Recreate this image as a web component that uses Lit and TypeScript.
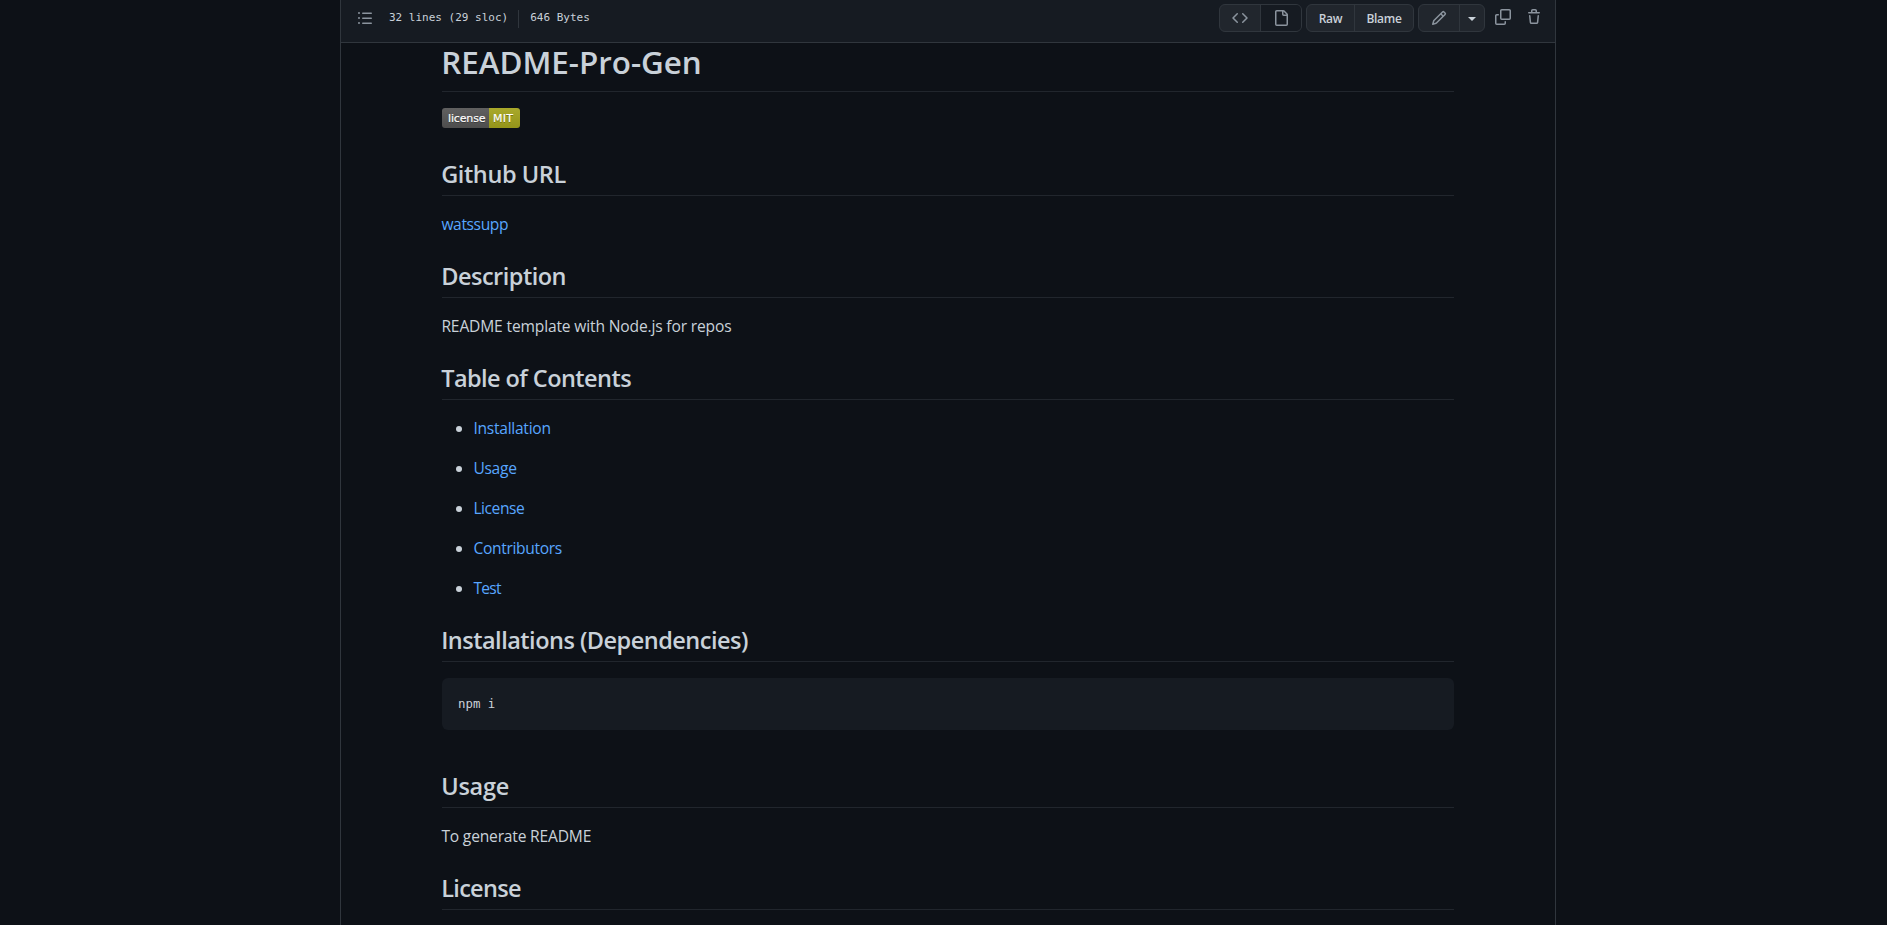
import { LitElement, html, css, svg } from "lit";
import { customElement } from "lit/decorators.js";

const ICONS = {
  list: "M2 4a1 1 0 100-2 1 1 0 000 2zm3.75-1.5a.75.75 0 000 1.5h8.5a.75.75 0 000-1.5h-8.5zm0 5a.75.75 0 000 1.5h8.5a.75.75 0 000-1.5h-8.5zm0 5a.75.75 0 000 1.5h8.5a.75.75 0 000-1.5h-8.5zM3 8a1 1 0 11-2 0 1 1 0 012 0zm-1 6a1 1 0 100-2 1 1 0 000 2z",
  code: "M4.72 3.22a.75.75 0 011.06 1.06L2.06 8l3.72 3.72a.75.75 0 11-1.06 1.06L.47 8.53a.75.75 0 010-1.06l4.25-4.25zm6.56 0a.75.75 0 10-1.06 1.06L13.94 8l-3.72 3.72a.75.75 0 101.06 1.06l4.25-4.25a.75.75 0 000-1.06l-4.25-4.25z",
  file: "M3.75 1.5a.25.25 0 00-.25.25v12.5c0 .138.112.25.25.25h9.5a.25.25 0 00.25-.25V6h-2.75A1.75 1.75 0 019 4.25V1.5H3.75zm6.75.062V4.25c0 .138.112.25.25.25h2.688a.252.252 0 00-.011-.013l-2.914-2.914a.272.272 0 00-.013-.011zM2 1.75C2 .784 2.784 0 3.75 0h6.586c.464 0 .909.184 1.237.513l2.914 2.914c.329.328.513.773.513 1.237v9.586A1.75 1.75 0 0113.25 16h-9.5A1.75 1.75 0 012 14.25V1.75z",
  pencil: "M11.013 1.427a1.75 1.75 0 012.474 0l1.086 1.086a1.75 1.75 0 010 2.474l-8.61 8.61c-.21.21-.47.364-.756.445l-3.251.93a.75.75 0 01-.927-.928l.929-3.25a1.75 1.75 0 01.445-.758l8.61-8.61zm1.414 1.06a.25.25 0 00-.354 0L10.811 3.75l1.439 1.44 1.263-1.263a.25.25 0 000-.354l-1.086-1.086zM11.189 6.25L9.75 4.81l-6.286 6.287a.25.25 0 00-.064.108l-.558 1.953 1.953-.558a.249.249 0 00.108-.064l6.286-6.286z",
  copy: "M0 6.75C0 5.784.784 5 1.75 5h1.5a.75.75 0 010 1.5h-1.5a.25.25 0 00-.25.25v7.5c0 .138.112.25.25.25h7.5a.25.25 0 00.25-.25v-1.5a.75.75 0 011.5 0v1.5A1.75 1.75 0 019.25 16h-7.5A1.75 1.75 0 010 14.25v-7.5zM5 1.75C5 .784 5.784 0 6.75 0h7.5C15.216 0 16 .784 16 1.75v7.5A1.75 1.75 0 0114.25 11h-7.5A1.75 1.75 0 015 9.25v-7.5zm1.75-.25a.25.25 0 00-.25.25v7.5c0 .138.112.25.25.25h7.5a.25.25 0 00.25-.25v-7.5a.25.25 0 00-.25-.25h-7.5z",
  trash: "M6.5 1.75a.25.25 0 01.25-.25h2.5a.25.25 0 01.25.25V3h-3V1.75zm4.5 0V3h2.25a.75.75 0 010 1.5H2.75a.75.75 0 010-1.5H5V1.75C5 .784 5.784 0 6.75 0h2.5C10.216 0 11 .784 11 1.75zM4.496 6.675a.75.75 0 10-1.492.15l.66 6.6A1.75 1.75 0 005.405 15h5.19c.9 0 1.652-.681 1.741-1.576l.66-6.6a.75.75 0 00-1.492-.149l-.66 6.6a.25.25 0 01-.249.225h-5.19a.25.25 0 01-.249-.225l-.66-6.6z",
};

const icon = (name: keyof typeof ICONS) =>
  html`<svg class="icon" viewBox="0 0 16 16" width="16" height="16" aria-hidden="true">${svg`<path fill-rule="evenodd" d=${ICONS[name]}></path>`}</svg>`;

/** Text paired with its letter spacing in pixels. */
type Tracked = [text: string, tracking: number];

const tracked = ([text, tracking]: Tracked) =>
  html`<span style="letter-spacing:${tracking}px">${text}</span>`;

const CONTENTS: Tracked[] = [
  ["Installation", -0.27],
  ["Usage", -0.3],
  ["License", -0.45],
  ["Contributors", -0.33],
  ["Test", -0.7],
];

@customElement("file-toolbar")
export class FileToolbar extends LitElement {
  static styles = css`
    :host {
      display: flex;
      align-items: flex-start;
      box-sizing: border-box;
      height: 43px;
      padding: 4px 13px 0 16px;
      background: #161b22;
      border-bottom: 1px solid #30363d;
      color: #c9d1d9;
    }
    .icon { display: block; fill: #8b949e; }
    .toc { margin: 6px 16px 0 0; }
    .info {
      display: flex;
      flex: 1;
      margin-top: 6px;
      font: 11px/16px "DejaVu Sans Mono", monospace;
      height: 18px;
    }
    .divider { width: 1px; height: 18px; margin: 0 11px 0 10px; background: #30363d; }
    .group {
      display: flex;
      box-sizing: border-box;
      height: 28px;
      margin-right: 4px;
      border: 1px solid #30363d;
      border-radius: 6px;
      background: #21262d;
      overflow: hidden;
    }
    .btn {
      display: flex;
      align-items: center;
      justify-content: center;
      box-sizing: border-box;
      font: 600 12px/20px "Open Sans", "Noto Sans", sans-serif;
      letter-spacing: -0.3px;
    }
    .btn + .btn { border-left: 1px solid #30363d; }
    .view .btn { width: 40px; }
    .view .active { width: 41px; background: #161b22; }
    .raw { width: 47px; padding-top: 2px; }
    .blame { width: 59px; padding-top: 2px; }
    .edit { width: 40px; }
    .more { width: 25px; }
    .caret {
      border: 4px solid transparent;
      border-top-color: #c9d1d9;
      border-bottom: 0;
      margin-top: 2px;
    }
    .plain { margin: 5px 0 0 6px; }
    .plain + .plain { margin-left: 15px; }
  `;

  render() {
    return html`
      <div class="toc">${icon("list")}</div>
      <div class="info">
        <span>32 lines (29 sloc)</span>
        <span class="divider"></span>
        <span>646 Bytes</span>
      </div>
      <div class="group view">
        <div class="btn">${icon("code")}</div>
        <div class="btn active">${icon("file")}</div>
      </div>
      <div class="group">
        <div class="btn raw">Raw</div>
        <div class="btn blame">Blame</div>
      </div>
      <div class="group">
        <div class="btn edit">${icon("pencil")}</div>
        <div class="btn more"><span class="caret"></span></div>
      </div>
      <div class="plain">${icon("copy")}</div>
      <div class="plain">${icon("trash")}</div>
    `;
  }
}

@customElement("license-badge")
export class LicenseBadge extends LitElement {
  static styles = css`
    :host {
      display: flex;
      width: 78px;
      height: 20px;
      border-radius: 3px;
      overflow: hidden;
      color: #fff;
      font: 11px/21px "DejaVu Sans", sans-serif;
      text-shadow: 0 1px 0 rgba(1, 1, 1, 0.3);
    }
    .label, .value {
      box-sizing: border-box;
      padding-left: 6px;
      background: linear-gradient(#606060, #4d4d4d);
      -webkit-text-stroke: 0.15px #fff;
    }
    .label { width: 47px; letter-spacing: -0.15px; }
    .value {
      width: 31px;
      padding-left: 4px;
      background: linear-gradient(#a9a92b, #94941a);
      letter-spacing: 0.2px;
    }
  `;

  render() {
    return html`<span class="label">license</span><span class="value">MIT</span>`;
  }
}

@customElement("app-root")
export class AppRoot extends LitElement {
  static styles = css`
    :host {
      display: block;
      height: 925px;
      overflow: hidden;
      background: #0d1117;
      color: #c9d1d9;
      font: 15.6px/24px "Open Sans", "Noto Sans", sans-serif;
    }
    .panel {
      box-sizing: border-box;
      width: 1216px;
      height: 925px;
      margin-left: 340px;
      border: solid #30363d;
      border-width: 0 1px;
    }
    .readme { width: 1012px; margin: 0 auto; }
    h1, h2 {
      box-sizing: border-box;
      margin: 24px 0 16px;
      border-bottom: 1px solid #21262d;
      font-weight: 600;
      white-space: nowrap;
      text-indent: -0.8px;
    }
    h1 { height: 49px; margin-top: 0; font-size: 31.4px; line-height: 38px; }
    h2 { height: 38px; font-size: 23.5px; line-height: 32px; }
    p, li { text-indent: -0.6px; }
    p { margin: 0 0 16px; }
    .badge { display: flex; height: 24px; text-indent: 0; }
    .link { color: #58a6ff; }
    .after-badge { margin-top: 26px; }
    ul { margin: 0 0 16px; padding-left: 32px; }
    li + li { margin-top: 16px; }
    pre {
      box-sizing: border-box;
      height: 52px;
      margin: 0;
      padding: 16px;
      border-radius: 6px;
      background: #161b22;
      font: 12.4px/20px "DejaVu Sans Mono", monospace;
    }
    .after-code { margin-top: 40px; }
  `;

  render() {
    return html`
      <main class="panel">
        <file-toolbar></file-toolbar>
        <article class="readme">
          <h1>${tracked(["README-Pro-Gen", -0.02])}</h1>
          <p class="badge"><license-badge></license-badge></p>
          <h2 class="after-badge">${tracked(["Github URL", -0.41])}</h2>
          <p class="link">${tracked(["watssupp", -0.38])}</p>
          <h2>${tracked(["Description", -0.5])}</h2>
          <p>${tracked(["README template with Node.js for repos", -0.16])}</p>
          <h2>${tracked(["Table of Contents", -0.56])}</h2>
          <ul>
            ${CONTENTS.map((item) => html`<li><a class="link">${tracked(item)}</a></li>`)}
          </ul>
          <h2>${tracked(["Installations (Dependencies)", -0.51])}</h2>
          <pre>npm i</pre>
          <h2 class="after-code">${tracked(["Usage", -0.25])}</h2>
          <p>${tracked(["To generate README", -0.19])}</p>
          <h2>${tracked(["License", -0.7])}</h2>
        </article>
      </main>
    `;
  }
}
